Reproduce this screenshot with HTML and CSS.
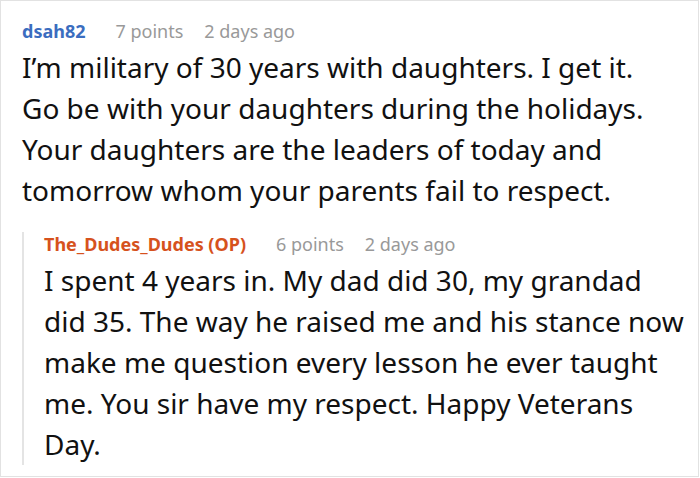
FILE: index.html
```html
<!DOCTYPE html>
<html>
<head>
<meta charset="utf-8">
<link rel="stylesheet" href="styles.css">
</head>
<body>
<div class="thread">
  <div class="comment">
    <div class="meta">
      <span class="author">dsah82</span>
      <span class="points">7 points</span>
      <span class="time">2 days ago</span>
    </div>
    <p class="text">I’m military of 30 years with daughters. I get it. Go be with your daughters during the holidays. Your daughters are the leaders of today and tomorrow whom your parents fail to respect.</p>
  </div>
  <div class="reply">
    <div class="meta">
      <span class="author op">The_Dudes_Dudes (OP)</span>
      <span class="points">6 points</span>
      <span class="time">2 days ago</span>
    </div>
    <p class="text">I spent 4 years in. My dad did 30, my grandad did 35. The way he raised me and his stance now make me question every lesson he ever taught me. You sir have my respect. Happy Veterans Day.</p>
  </div>
</div>
</body>
</html>
```
FILE: styles.css
```css
html, body {
  margin: 0;
  padding: 0;
  background: #fff;
}
.thread {
  box-sizing: border-box;
  width: 699px;
  height: 477px;
  border: 1px solid #e2e2e2;
  padding: 18px 10px 0 21px;
  font-family: "Noto Sans", "Open Sans", sans-serif;
  color: #111;
}
.meta {
  font-size: 18px;
  line-height: 24px;
  display: flex;
  align-items: baseline;
}
.author {
  font-weight: bold;
  color: #3b6dbf;
  margin-right: 30px;
}
.author.op {
  color: #d6521d;
}
.points {
  color: #999;
  margin-right: 21px;
}
.time {
  color: #999;
}
.text {
  margin: 4px 0 0;
  font-size: 28px;
  line-height: 41px;
}
.comment .text {
  margin-right: 33px;
}
.reply {
  margin-top: 28px;
  border-left: 2px solid #e4e4e4;
  padding-left: 20px;
}
.reply .meta {
  margin-top: -7px;
}
```
